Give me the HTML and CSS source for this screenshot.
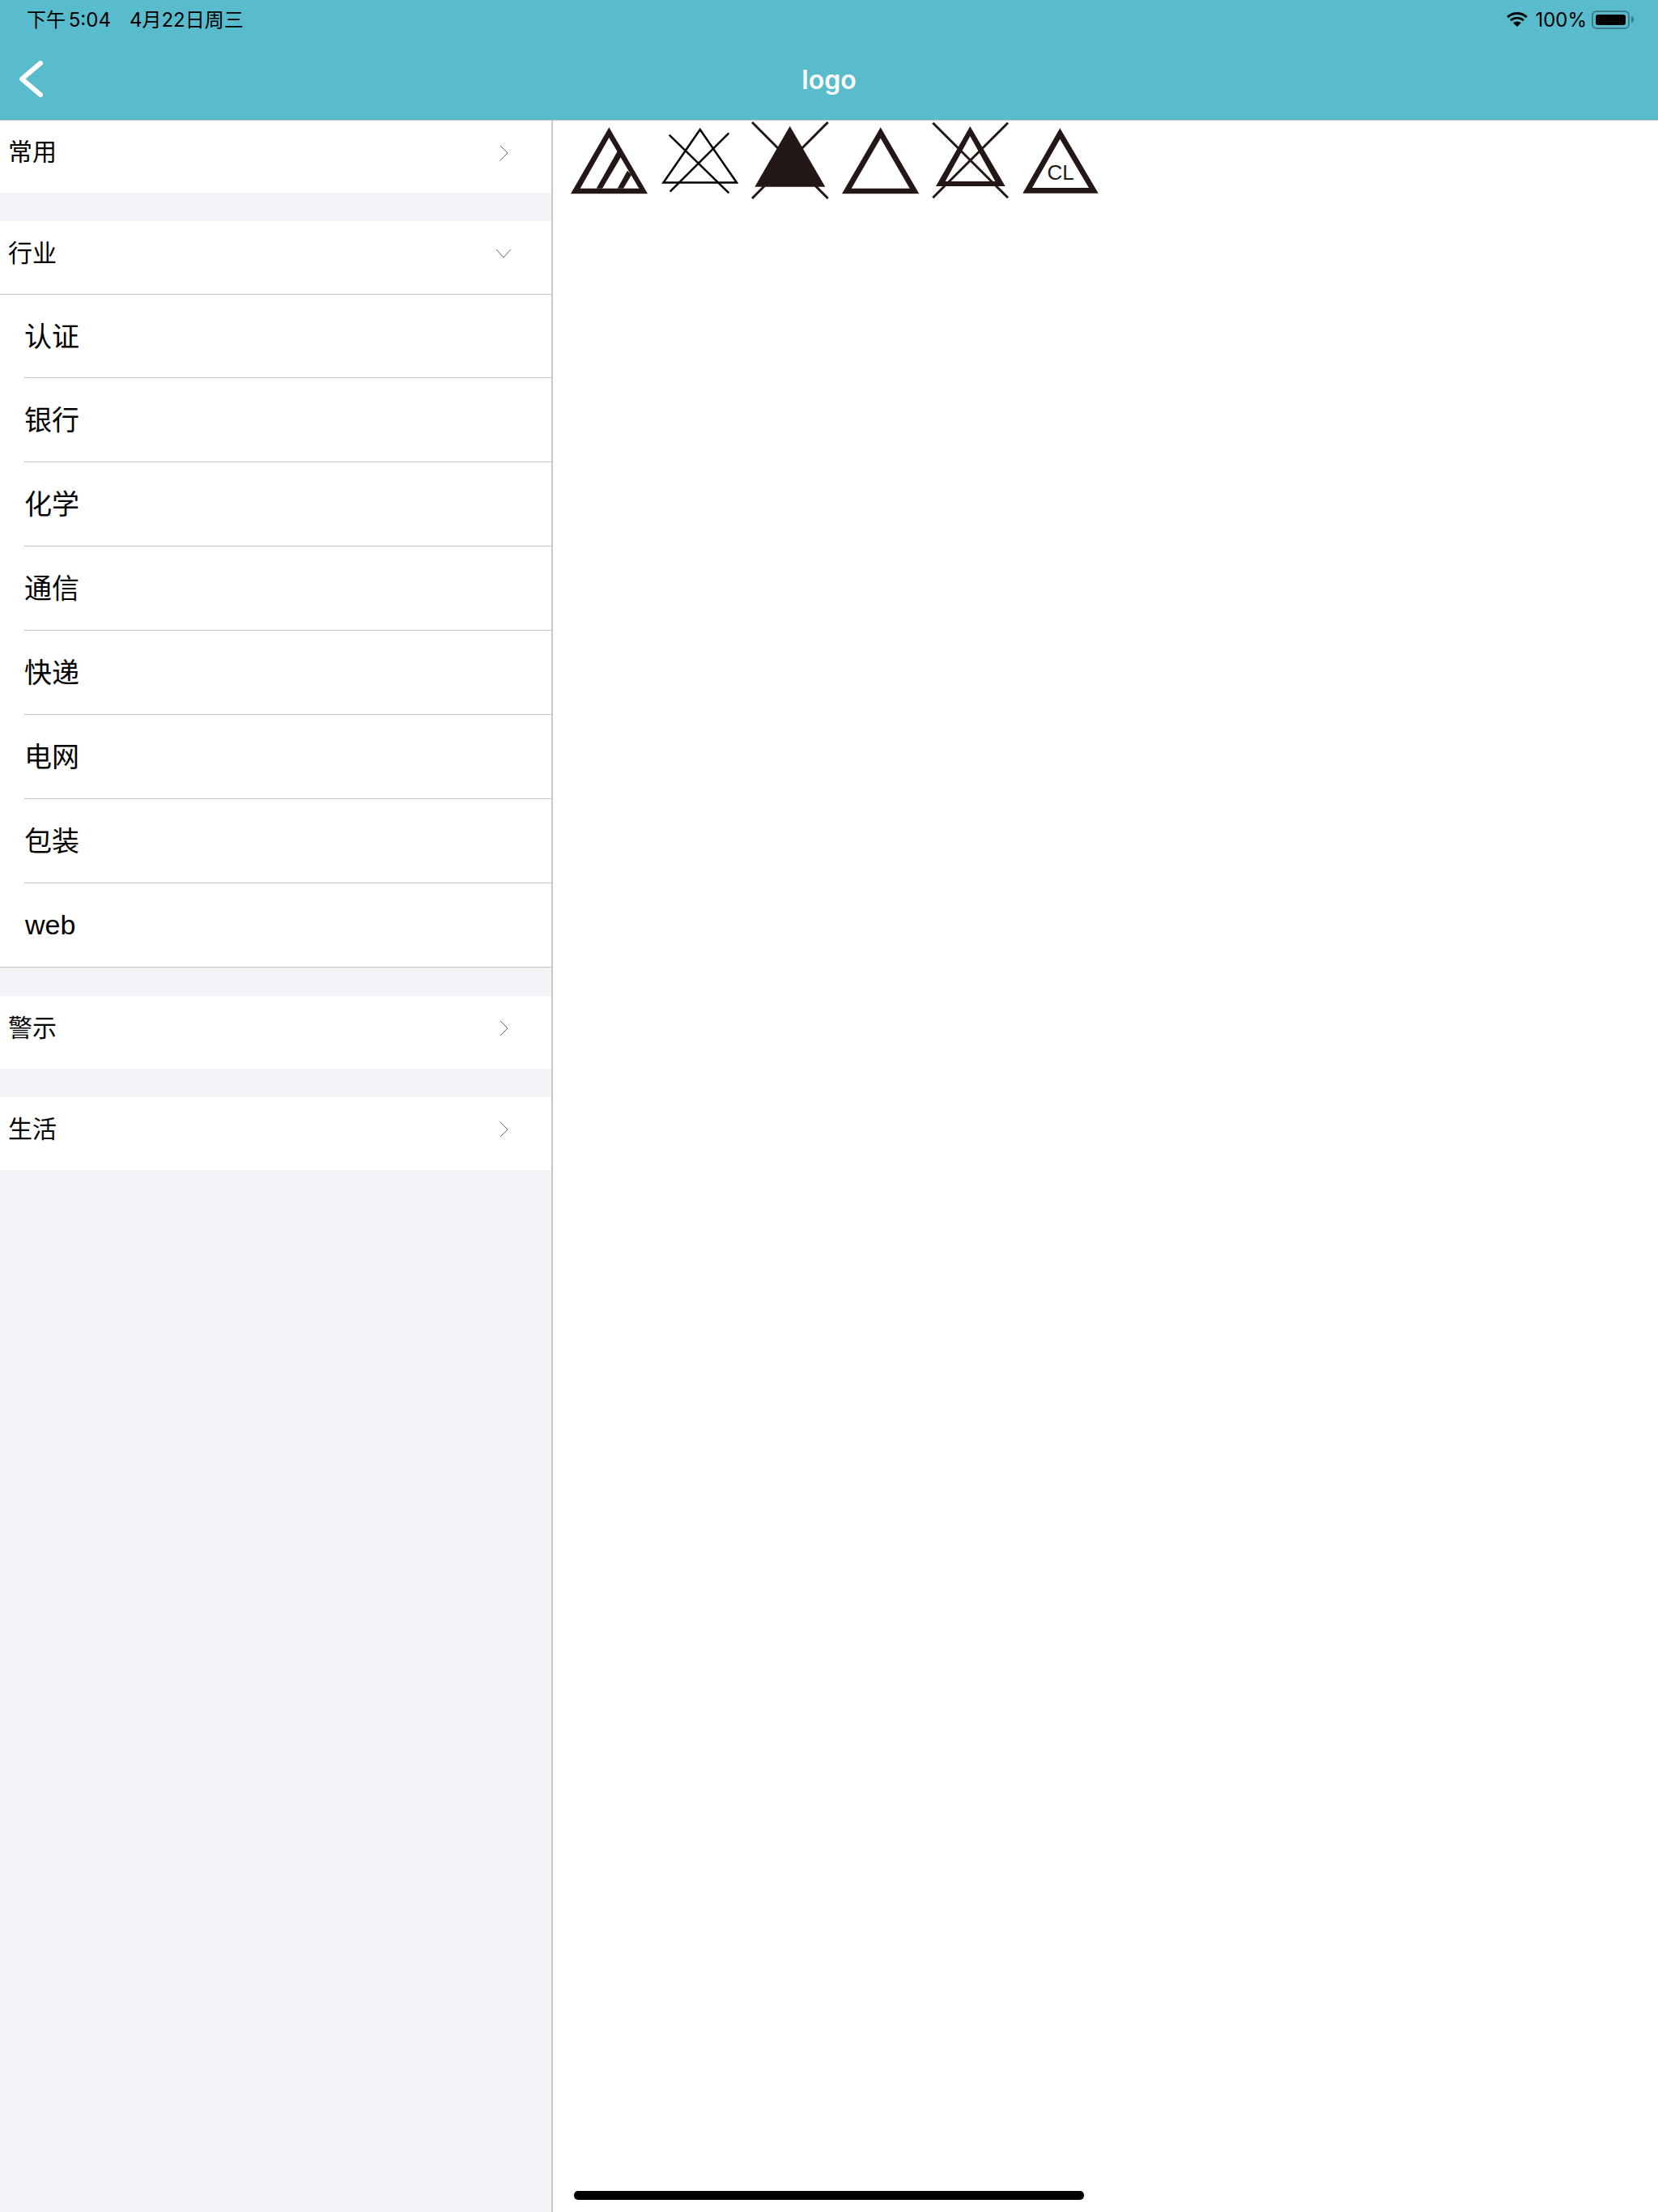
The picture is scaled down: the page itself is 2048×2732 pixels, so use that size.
FILE: index.html
```html
<!DOCTYPE html>
<html lang="zh-CN">
<head>
    <meta charset="UTF-8">
    <title>logo</title>
    <link rel="stylesheet" href="styles.css">
</head>
<body>
    <header class="topbar">
        <div class="status-bar">
            <div class="status-left">
                <span class="status-time">下午 5:04</span>
                <span>4月22日周三</span>
            </div>
            <div class="status-right">
                <svg class="wifi" viewBox="0 0 28 20">
                    <path d="M14 4c4.200 0 8 1.600 10.800 4.200l2-2.100C23.400 2.900 18.900 1 14 1S4.600 2.900 1.200 6.100l2 2.100C6 5.600 9.800 4 14 4z"/>
                    <path d="M14 9.600c2.700 0 5.100 1 7 2.700l2-2.100c-2.400-2.200-5.600-3.500-9-3.500s-6.600 1.300-9 3.500l2 2.100c1.900-1.700 4.300-2.700 7-2.700z"/>
                    <path d="M14 12.400c-1.900 0-3.600 .7-4.900 1.900L14 19l4.900-4.700c-1.300-1.200-3-1.900-4.900-1.900z"/>
                </svg>
                <span>100%</span>
                <div class="battery"><div class="battery-level"></div></div>
                <div class="battery-cap"></div>
            </div>
        </div>
        <div class="nav-bar">
            <svg class="back" viewBox="0 0 40 52">
                <polyline points="26,3 3,22.500 26,42"/>
            </svg>
            <div class="nav-title">logo</div>
        </div>
    </header>

    <main class="content">
        <!-- Category list -->
        <aside class="sidebar">
            <div class="group">
                <div class="group-head">
                    <span class="group-name">常用</span>
                    <svg class="chevron" viewBox="0 0 20 20"><polyline points="6,1 15,10 6,19"/></svg>
                </div>
            </div>

            <div class="group open">
                <div class="group-head">
                    <span class="group-name">行业</span>
                    <svg class="chevron" viewBox="0 0 20 20"><polyline points="1,5 10,15 19,5"/></svg>
                </div>
                <ul class="sub-list">
                    <li>认证</li>
                    <li>银行</li>
                    <li>化学</li>
                    <li>通信</li>
                    <li>快递</li>
                    <li>电网</li>
                    <li>包装</li>
                    <li>web</li>
                </ul>
            </div>

            <div class="group">
                <div class="group-head">
                    <span class="group-name">警示</span>
                    <svg class="chevron" viewBox="0 0 20 20"><polyline points="6,1 15,10 6,19"/></svg>
                </div>
            </div>

            <div class="group">
                <div class="group-head">
                    <span class="group-name">生活</span>
                    <svg class="chevron" viewBox="0 0 20 20"><polyline points="6,1 15,10 6,19"/></svg>
                </div>
            </div>
        </aside>

        <!-- Logo grid -->
        <section class="logo-grid">
            <svg class="logo" viewBox="0 0 96 96">
                <path class="solid" fill-rule="evenodd" d="M47.300 7.300L0 89.300H95ZM47.300 20L84.300 82.700H11.700Z"/>
                <path class="solid" d="M31.700 82.700L57.700 36.700L62.300 43.300L39 82.700Z"/>
                <path class="solid" d="M57.700 82.700L70 60.700L75 66L65 82.700Z"/>
            </svg>
            <svg class="logo" viewBox="0 0 96 96">
                <path class="thin" d="M47.700 10L2.500 75.500H93Z"/>
                <line class="thin" x1="9.700" y1="16.700" x2="83.300" y2="88.300"/>
                <line class="thin" x1="83.300" y1="14.300" x2="10.700" y2="86.700"/>
            </svg>
            <svg class="logo" viewBox="0 0 96 96">
                <line class="cross" x1="1" y1="1" x2="94.700" y2="95"/>
                <line class="cross" x1="94.700" y1="1" x2="1" y2="95"/>
                <path class="solid" d="M47.700 5.700L4.300 80.700H91.300Z"/>
            </svg>
            <svg class="logo" viewBox="0 0 96 96">
                <path class="solid" fill-rule="evenodd" d="M47.700 7.300L0 89.300H95.300ZM47.700 20.700L83.700 82.700H11.700Z"/>
            </svg>
            <svg class="logo" viewBox="0 0 96 96">
                <path class="solid" fill-rule="evenodd" d="M47.300 6L5 80H90.700ZM47.300 18.300L78.300 74H16.700Z"/>
                <line class="cross" x1="1.300" y1="1.700" x2="94" y2="94.300"/>
                <line class="cross" x1="94" y1="1.700" x2="1.300" y2="94.300"/>
            </svg>
            <svg class="logo" viewBox="0 0 96 96">
                <path class="solid" fill-rule="evenodd" d="M46.300 8.300L.3 88.700H93.700ZM46.300 21.700L82 82H12Z"/>
                <text class="logo-text" x="47" y="71.700">CL</text>
            </svg>
        </section>
    </main>

    <div class="home-indicator"></div>
</body>
</html>
```

FILE: styles.css
```css
* {
    box-sizing: border-box;
}

body {
    margin: 0;
    height: 2732px;
    position: relative;
    overflow: hidden;
    display: flex;
    flex-direction: column;
    font-family: "Liberation Sans", "Noto Sans CJK SC", sans-serif;
    background-color: #fff;
    color: #000;
}

.topbar {
    height: 149px;
    background-color: #58bccc;
    border-bottom: 1px solid #c4c4c4;
}

.status-bar {
    height: 48px;
    padding: 0 30px 0 33px;
    display: flex;
    justify-content: space-between;
    align-items: center;
    font-family: Inter, "Noto Sans CJK SC", sans-serif;
    font-size: 24px;
}

.status-left {
    display: flex;
    gap: 23px;
    margin-bottom: 4px;
}

.status-time {
    word-spacing: -3px;
}

.status-right {
    display: flex;
    align-items: center;
}

.wifi {
    width: 28px;
    height: 20px;
    margin-right: 8px;
}

.battery {
    width: 47px;
    height: 23px;
    margin-left: 6px;
    padding: 3px;
    border: 2px solid #3d7d8a;
    border-radius: 6px;
}

.battery-level {
    height: 100%;
    background-color: #000;
    border-radius: 3px;
}

.battery-cap {
    width: 3px;
    height: 8px;
    margin-left: 2px;
    background-color: #3d7d8a;
    border-radius: 0 3px 3px 0;
}

.nav-bar {
    height: 100px;
    display: flex;
    justify-content: center;
    align-items: center;
    position: relative;
}

.back {
    position: absolute;
    left: 24px;
    top: 27px;
    width: 40px;
    height: 52px;
    fill: none;
    stroke: #fff;
    stroke-width: 6px;
    stroke-linecap: round;
    stroke-linejoin: round;
}

.nav-title {
    color: #fff;
    font-family: Inter, sans-serif;
    font-size: 32px;
    font-weight: 600;
}

.content {
    flex: 1;
    display: flex;
}

.sidebar {
    width: 683px;
    background-color: #f2f2f7;
    border-right: 2px solid #c8c8c8;
    display: flex;
    flex-direction: column;
    gap: 35px;
}

.group {
    background-color: #fff;
}

.group-head {
    height: 90px;
    padding: 0 49px 10px 10px;
    display: flex;
    justify-content: space-between;
    align-items: center;
    font-size: 30px;
}

.group:first-child .group-head {
    height: 89px;
}

.group-name {
    margin-bottom: 6px;
}

.group:first-child .group-name {
    margin-bottom: 8px;
}

.open {
    border-bottom: 1px solid #c4c4c6;
}

.open .group-head {
    height: 91px;
    border-bottom: 1px solid #c4c4c6;
}

.chevron {
    width: 20px;
    height: 20px;
    fill: none;
    stroke: #666;
    stroke-width: 1px;
}

.sub-list {
    list-style: none;
    margin: 0;
    padding: 0 0 0 30px;
    font-size: 34px;
}

.sub-list li {
    height: 104px;
    padding-bottom: 4px;
    display: flex;
    align-items: center;
    border-bottom: 1px solid #c4c4c6;
}

.sub-list li:first-child {
    height: 103px;
}

.sub-list li:last-child {
    height: 103px;
    padding: 0 0 0 1px;
    border-bottom: none;
}

.logo-grid {
    flex: 1;
    padding: 1px 0 0 22px;
    display: flex;
    align-items: flex-start;
    gap: 15.600px;
}

.logo {
    width: 96px;
    height: 96px;
}

.solid {
    fill: #231815;
}

.thin {
    fill: none;
    stroke: #000;
    stroke-width: 2.500px;
}

.cross {
    stroke: #231815;
    stroke-width: 3px;
}

.logo-text {
    fill: #231815;
    font-size: 26px;
    text-anchor: middle;
}

.home-indicator {
    position: absolute;
    left: 709px;
    bottom: 15px;
    width: 630px;
    height: 11px;
    background-color: #000;
    border-radius: 5px;
}
```
